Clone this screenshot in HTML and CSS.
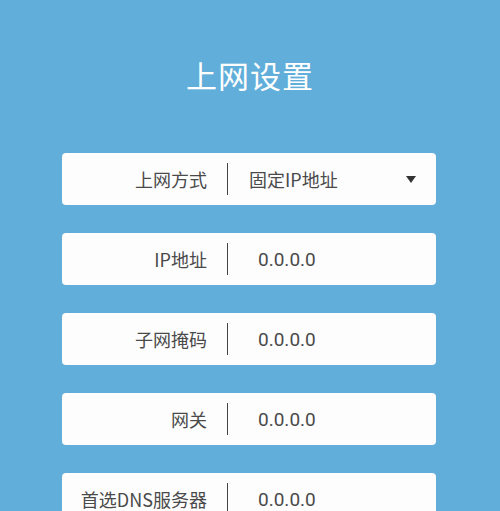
FILE: index.html
```html
<!DOCTYPE html>
<html lang="zh-CN">
<head>
<meta charset="utf-8">
<title>上网设置</title>
<link rel="stylesheet" href="styles.css">
</head>
<body>
<div class="page">
  <h1 class="title">上网设置</h1>
  <div class="form">
    <div class="row">
      <span class="label">上网方式</span>
      <span class="divider"></span>
      <span class="value select">固定IP地址</span>
      <svg class="arrow" width="10" height="7" viewBox="0 0 10 7"><polygon points="0,0 10,0 5,7" fill="#333"/></svg>
    </div>
    <div class="row">
      <span class="label">IP地址</span>
      <span class="divider"></span>
      <span class="value">0.0.0.0</span>
    </div>
    <div class="row">
      <span class="label">子网掩码</span>
      <span class="divider"></span>
      <span class="value">0.0.0.0</span>
    </div>
    <div class="row">
      <span class="label">网关</span>
      <span class="divider"></span>
      <span class="value">0.0.0.0</span>
    </div>
    <div class="row">
      <span class="label">首选DNS服务器</span>
      <span class="divider"></span>
      <span class="value">0.0.0.0</span>
    </div>
  </div>
</div>
</body>
</html>
```
FILE: styles.css
```css
html, body {
  margin: 0;
  padding: 0;
}
body {
  background: #60aed9;
  font-family: "Noto Sans CJK SC", "Noto Sans", sans-serif;
  overflow: hidden;
}
.page {
  height: 511px;
  padding-top: 55px;
  box-sizing: border-box;
}
.title {
  margin: 0;
  text-align: center;
  color: #ffffff;
  font-size: 31px;
  font-weight: 400;
  line-height: 40px;
  letter-spacing: 1px;
}
.form {
  margin-top: 58px;
  display: flex;
  flex-direction: column;
  gap: 28px;
  padding-left: 62px;
}
.row {
  width: 374px;
  height: 52px;
  background: #fdfdfd;
  border-radius: 4px;
  display: flex;
  align-items: center;
  box-sizing: border-box;
}
.label {
  width: 145px;
  text-align: right;
  font-size: 18px;
  color: #4a4a4a;
  white-space: nowrap;
}
.divider {
  width: 1px;
  height: 32px;
  background: #444;
  margin-left: 20px;
}
.value {
  margin-left: 30px;
  font-size: 19px;
  color: #4a4a4a;
  font-family: Roboto, "Noto Sans", sans-serif;
  flex: 1;
}
.value.select {
  margin-left: 21px;
  font-size: 18px;
  font-family: "Noto Sans CJK SC", "Noto Sans", sans-serif;
}
.arrow {
  margin-right: 20px;
}
```
